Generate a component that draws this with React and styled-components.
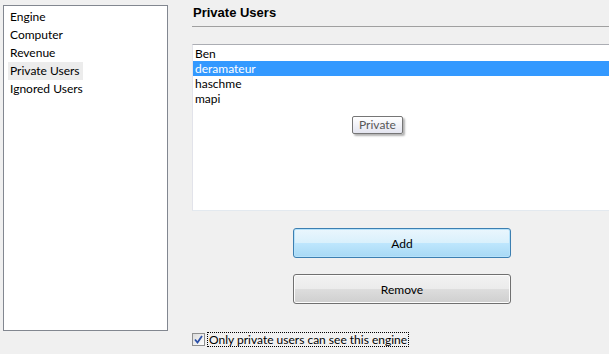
import React from 'react'
import styled, { createGlobalStyle } from 'styled-components'

const Global = createGlobalStyle`
  html, body { margin: 0; padding: 0; background: #f0f0f0; }
  body { font-family: "Segoe UI", Lato, "Open Sans", sans-serif; font-size: 12px; color: #000; }
`

const Page = styled.div`
  width: 609px;
  height: 354px;
  display: flex;
  overflow: hidden;
  background: #f0f0f0;
`

const Sidebar = styled.ul`
  box-sizing: border-box;
  margin: 5px 0 0 3px;
  width: 165px;
  height: 326px;
  padding: 2px 0 0 4px;
  list-style: none;
  background: #fff;
  border: 1px solid #828790;
`

const NavItem = styled.li`
  width: fit-content;
  height: 18px;
  line-height: 18px;
  padding: 0 3px 0 2px;
  white-space: nowrap;
  background: ${p => (p.active ? '#ececec' : 'transparent')};
`

const Content = styled.div`
  flex: 1;
  margin-left: 24px;
  display: flex;
  flex-direction: column;
`

const Title = styled.h1`
  margin: 0;
  padding: 5px 0 0 1px;
  height: 21px;
  font-family: Tahoma, "Liberation Sans", sans-serif;
  font-size: 13px;
  font-weight: bold;
  border-bottom: 1px solid #a0a0a0;
`

const UserList = styled.ul`
  position: relative;
  box-sizing: border-box;
  margin: 17px 0 0 0;
  height: 167px;
  padding: 1px 0 0 0;
  list-style: none;
  background: #fff;
  border-top: 1px solid #abadb3;
  border-left: 1px solid #e2e3ea;
  border-bottom: 1px solid #e3e9ef;
`

const UserRow = styled.li`
  height: 15px;
  line-height: 15px;
  padding-left: 2px;
  color: ${p => (p.selected ? '#fff' : '#000')};
  background: ${p => (p.selected ? '#3399ff' : 'transparent')};
`

const Tooltip = styled.div`
  position: absolute;
  left: 159px;
  top: 71px;
  box-sizing: border-box;
  height: 18px;
  padding: 0 6px;
  line-height: 15px;
  color: #575757;
  background: linear-gradient(#ffffff, #e4e5f0);
  border: 1px solid #767676;
  border-radius: 2px;
  box-shadow: 2px 2px 2px rgba(0, 0, 0, 0.3);
`

const Buttons = styled.div`
  display: flex;
  flex-direction: column;
  gap: 16px;
  margin: 17px 0 0 101px;
  width: 218px;
`

const Button = styled.button`
  box-sizing: border-box;
  height: 30px;
  font: inherit;
  color: #000;
  border-radius: 3px;
  border: 1px solid ${p => (p.primary ? '#3c7fb1' : '#707070')};
  background: ${p =>
    p.primary
      ? 'linear-gradient(#eaf6fd 0%, #d9f0fc 50%, #bee6fd 51%, #a7d9f5 100%)'
      : 'linear-gradient(#f2f2f2 0%, #ebebeb 50%, #dddddd 51%, #cfcfcf 100%)'};
  box-shadow: ${p => (p.primary ? 'inset 0 0 0 1px #b6e2fb' : 'inset 0 0 0 1px #fcfcfc')};
`

const CheckRow = styled.label`
  display: flex;
  align-items: center;
  gap: 3px;
  margin-top: 28px;
  height: 15px;
`

const Box = styled.span`
  box-sizing: border-box;
  width: 13px;
  height: 13px;
  border: 1px solid #8e8f8f;
  background: linear-gradient(135deg, #dcdcdc, #fdfdfd);
  display: flex;
  align-items: center;
  justify-content: center;
`

const CheckText = styled.span`
  line-height: 13px;
  outline: 1px dotted #000;
  padding: 0 1px;
`

const nav = ['Engine', 'Computer', 'Revenue', 'Private Users', 'Ignored Users']
const users = ['Ben', 'deramateur', 'haschme', 'mapi']

export default function App() {
  return (
    <Page>
      <Global />
      <Sidebar>
        {nav.map(n => (
          <NavItem key={n} active={n === 'Private Users'}>{n}</NavItem>
        ))}
      </Sidebar>
      <Content>
        <Title>Private Users</Title>
        <UserList>
          {users.map(u => (
            <UserRow key={u} selected={u === 'deramateur'}>{u}</UserRow>
          ))}
          <Tooltip>Private</Tooltip>
        </UserList>
        <Buttons>
          <Button primary>Add</Button>
          <Button>Remove</Button>
        </Buttons>
        <CheckRow>
          <Box>
            <svg width="9" height="9" viewBox="0 0 9 9">
              <path d="M1 4.5 L3.5 7.5 L8 1" fill="none" stroke="#2a4fa8" strokeWidth="1.8" />
            </svg>
          </Box>
          <CheckText>Only private users can see this engine</CheckText>
        </CheckRow>
      </Content>
    </Page>
  )
}
